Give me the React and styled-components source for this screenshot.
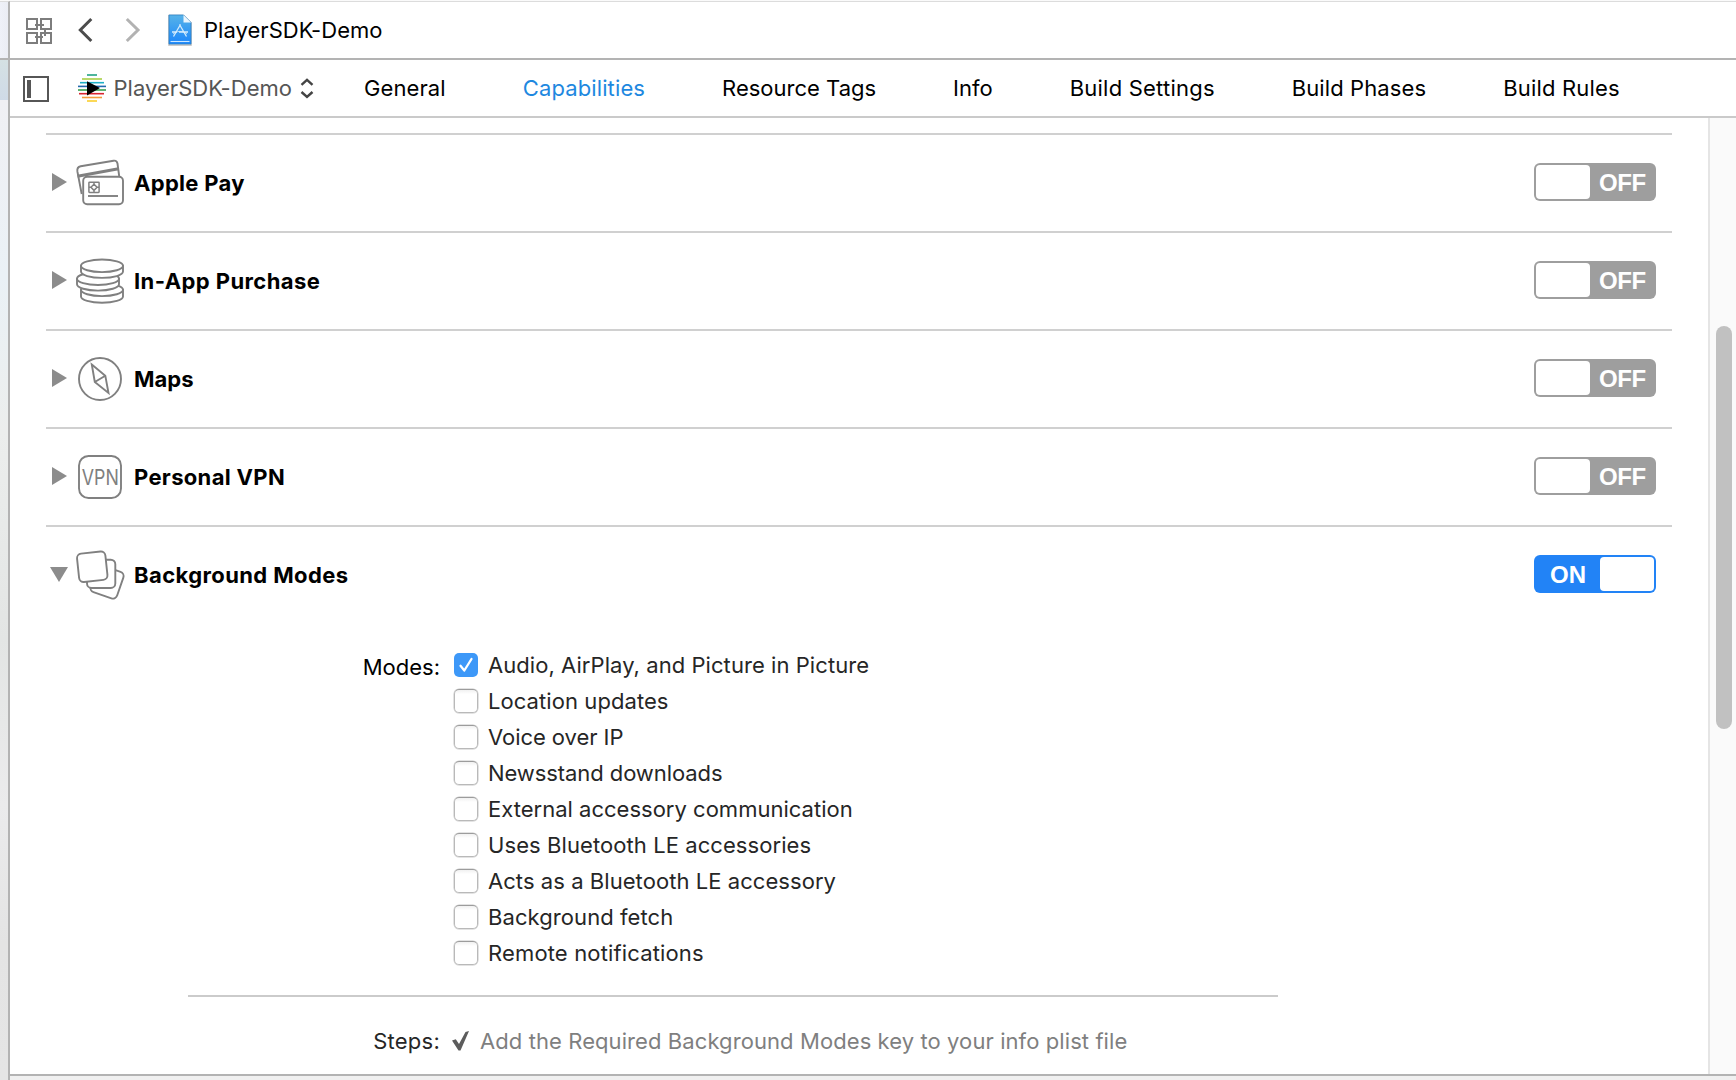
import React, { useState } from "react";
import styled, { createGlobalStyle } from "styled-components";

const GlobalStyle = createGlobalStyle`
  *, *::before, *::after { box-sizing: border-box; }
  body {
    margin: 0;
    background: #fff;
    color: #000;
    font: 400 22px/24px Inter, "Liberation Sans", sans-serif;
    overflow: hidden;
  }
`;

const Window = styled.div`
  display: flex;
  width: 1736px;
  height: 1080px;
  border-top: 1px solid #fafafa;
  overflow: hidden;
`;

const Navigator = styled.aside`
  display: flex;
  flex-direction: column;
  flex: 0 0 10px;
  border-right: 2px solid #b3b3b3;
  border-top: 1px solid #dcdcdc;
`;

const NavigatorTop = styled.div`
  height: 58px;
  border-bottom: 2px solid #b3b3b3;
  background: linear-gradient(90deg, #eff1f8, #ebedf4);
`;

const NavigatorSelection = styled.div`
  height: 40px;
  background: linear-gradient(#d5e1e3, #cfdae7);
`;

const NavigatorBody = styled.div`
  flex: 1;
  background: linear-gradient(#f0f0f4 0%, #eaf1f6 18%, #eceeed 34%, #e3e5e4 55%, #ebebec 72%, #e4e4e4 86%, #e5e5e5 100%);
`;

const Editor = styled.main`
  display: flex;
  flex-direction: column;
  flex: 1;
  min-width: 0;
  border-top: 1px solid #dcdcdc;
`;

const JumpBar = styled.header`
  display: flex;
  align-items: center;
  height: 58px;
  padding-left: 16px;
  border-bottom: 2px solid #b3b3b3;
`;

const IconButton = styled.button`
  display: flex;
  padding: ${(p) => p.$drop || 0}px 0 0;
  margin: 0 ${(p) => p.$after}px 0 0;
  border: 0;
  background: none;
`;

const Glyph = styled.svg`
  display: block;
  flex: none;
  overflow: visible;
`;

const Label = styled.span`
  white-space: nowrap;
  letter-spacing: ${(p) => p.$track || 0}px;
`;

const TabBar = styled.nav`
  display: flex;
  align-items: center;
  height: 58px;
  padding-left: 13px;
  border-bottom: 2px solid #cacaca;
`;

const TargetPicker = styled.div`
  display: flex;
  align-items: center;
  width: 248px;
  margin-left: 29px;
  gap: 7.5px;
  color: #565656;
`;

const Tabs = styled.div`
  display: flex;
  gap: 77px;
  margin-left: 38px;
`;

const Tab = styled.button`
  padding: 0;
  border: 0;
  background: none;
  font: inherit;
  white-space: nowrap;
  letter-spacing: ${(p) => p.$track}px;
  color: ${(p) => (p.$active ? "#1e88e0" : "#000")};
`;

const Viewport = styled.div`
  display: flex;
  flex: 1;
  min-height: 0;
`;

const Content = styled.section`
  flex: 1;
  padding: 15px 36px 0;
`;

const Capability = styled.div`
  display: flex;
  align-items: center;
  height: 98px;
  padding: 0 16px 0 4px;
  border-top: 2px solid #d0d0d0;
`;

const Disclosure = styled.span`
  display: flex;
  justify-content: center;
  width: 18px;
  margin-bottom: 2px;
`;

const CapabilityIcon = styled(Glyph)`
  margin: 0 10px 0 8px;
`;

const CapabilityName = styled.h2`
  flex: 1;
  margin: 0;
  font: 700 22px/24px Inter, "Liberation Sans", sans-serif;
  letter-spacing: ${(p) => p.$track}px;
`;

const Toggle = styled.button`
  display: flex;
  flex-direction: ${(p) => (p.$on ? "row-reverse" : "row")};
  align-items: stretch;
  width: 122px;
  height: 38px;
  margin: 0 0 2px;
  padding: 2px;
  border: 0;
  border-radius: 6px;
  background: ${(p) => (p.$on ? "#2283f6" : "#9e9e9e")};
`;

const Knob = styled.span`
  width: 54px;
  border-radius: 4px;
  background: #fff;
`;

const ToggleText = styled.span`
  flex: 1;
  padding-left: ${(p) => (p.$on ? 0 : 1)}px;
  font: 700 24px/35px "Liberation Sans", Arial, sans-serif;
  letter-spacing: ${(p) => (p.$on ? 0 : -0.4)}px;
  text-align: center;
  color: #fff;
`;

const ModesForm = styled.div`
  display: grid;
  grid-template-columns: 394px 1fr;
  column-gap: 14px;
  padding-top: 30px;
`;

const FormLabel = styled.div`
  padding-top: ${(p) => p.$drop || 0}px;
  text-align: right;
  letter-spacing: ${(p) => p.$track}px;
  color: ${(p) => p.$color};
`;

const ModeList = styled.div`
  display: flex;
  flex-direction: column;
  gap: 12px;
`;

const ModeRow = styled.label`
  display: flex;
  align-items: center;
  height: 24px;
  gap: 10px;
  color: #262626;
`;

const Box = styled.span`
  display: flex;
  align-items: center;
  justify-content: center;
  width: 24px;
  height: 24px;
  border-radius: 5px;
  border: ${(p) => (p.$checked ? "0" : "1.5px solid #b9b9b9")};
  border-top-color: #9c9c9c;
  box-shadow: ${(p) => (p.$checked ? "none" : "0 0 0 0.5px #c8c8c8")};
  background: ${(p) => (p.$checked ? "#3d98f8" : "linear-gradient(#f1f1f1, #fff 4px)")};
`;

const StepsRule = styled.hr`
  width: 1090px;
  height: 2px;
  margin: 30px 0 32px 142px;
  border: 0;
  background: #cbcbcb;
`;

const StepsRow = styled.div`
  display: grid;
  grid-template-columns: 394px 1fr;
  column-gap: 12px;
`;

const Step = styled.div`
  display: flex;
  align-items: center;
  gap: 11px;
  color: #7f7f7f;
`;

const ScrollTrack = styled.div`
  flex: 0 0 28px;
  padding: 208px 0 0 6px;
  border-left: 2px solid #e5e5e5;
  background: #fafafa;
`;

const ScrollThumb = styled.div`
  width: 16px;
  height: 403px;
  border-radius: 8px;
  background: #c1c1c1;
`;

const BottomBar = styled.footer`
  height: 6px;
  border-top: 2px solid #b3b3b3;
  background: #f0f0f0;
`;

const RelatedItems = () => (
  <Glyph width="26" height="26" fill="none" stroke="#7d7d7d" strokeWidth="2">
    <path d="M11 5V1H1V11H11V9M15 5V1H25V11H15V9M11 17V15H1V25H11V21M21 15H25V25H15V19M15 16V15H17" />
    <path d="M9 7H18M15 5V9M11 5V9M19 11V18M17 15H21M9 19H17M11 17V21M15 16V21" />
  </Glyph>
);

const Chevron = ({ forward }) => (
  <Glyph width="13" height="24" fill="none" stroke={forward ? "#b2b2b2" : "#4c4c4c"} strokeWidth="3">
    <path d={forward ? "M.8 1L12 12L.8 23" : "M12.300 1L1.300 12L12.300 23"} />
  </Glyph>
);

const ProjectFile = () => (
  <Glyph width="24" height="32">
    <defs>
      <linearGradient id="file" x1="0" y1="0" x2="0" y2="1">
        <stop offset="0" stopColor="#57b3e8" />
        <stop offset="1" stopColor="#1b86fb" />
      </linearGradient>
    </defs>
    <path d="M1 1.500H15.500L23 9V31H1Z" fill="none" stroke="#bbb" strokeWidth="1.600" />
    <path d="M1 1H15.500L23 8.500V30H1Z" fill="url(#file)" stroke="#2e83c8" strokeWidth=".8" />
    <path d="M15.500 1V8.500H23Z" fill="#e9f5fd" />
    <path d="M2.500 27.500H21.500" stroke="#cde8ff" strokeWidth="1.100" />
    <g fill="none" stroke="#d4ecfd" strokeWidth="1.300">
      <path d="M12.500 10.500L5.500 22.500M11.500 10.500L18.500 22.500M4 18H9M11 18H20" />
      <path d="M5 20C8 17 15 16 19 20" strokeWidth=".8" />
    </g>
  </Glyph>
);

const PanelIcon = () => (
  <Glyph width="26" height="26">
    <rect x="1" y="1" width="24" height="24" fill="none" stroke="#565656" strokeWidth="2" />
    <rect x="4" y="4" width="4" height="18" fill="#565656" />
  </Glyph>
);

const stripes = [
  ["#23a384", 9, 19, 1],
  ["#a8cf45", 4, 24, 5],
  ["#1fb0c6", 2, 26, 8.7],
  ["#2269ad", 0, 28, 12.4],
  ["#38a04f", 0, 28, 16],
  ["#d92732", 1, 26, 19.7],
  ["#f39a3b", 4, 24, 23.5],
  ["#fbcf2e", 9, 19, 27],
];

const AppLogo = () => (
  <Glyph width="28" height="28">
    {stripes.map(([color, from, to, y]) => (
      <path key={color} d={`M${from} ${y}H${to}`} stroke={color} strokeWidth="1.600" />
    ))}
    <path d="M9 7.200L22 14.100L9 21.500Z" fill="#000" />
  </Glyph>
);

const PickerArrows = () => (
  <Glyph width="14" height="20" fill="none" stroke="#444" strokeWidth="2.400">
    <path d="M1.500 6.900L7 1.900L12.500 6.900M1.500 14L7 19L12.500 14" />
  </Glyph>
);

const Triangle = ({ open }) => (
  <Glyph width={open ? 18 : 15} height={open ? 15 : 18} fill="#8c8c8c">
    <path d={open ? "M0 0H18L9 15Z" : "M0 0L15 9L0 18Z"} />
  </Glyph>
);

const CapabilityFrame = ({ children }) => (
  <CapabilityIcon width="48" height="48" fill="none" stroke="#808080" strokeWidth="1.900" strokeLinejoin="round">
    {children}
  </CapabilityIcon>
);

const Cards = () => (
  <CapabilityFrame>
    <path d="M5.700 35L1.400 12.500Q.7 8.200 4.700 7.300L37.500 1.700Q40.800 1.200 41.500 4.500L43.300 18" />
    <path d="M1.500 17.300L42.500 9.800" strokeWidth="3" />
    <rect x="7.200" y="17.700" width="39.800" height="27.600" rx="4" fill="#fff" />
    <rect x="12.900" y="23.200" width="10.200" height="10.200" rx=".6" strokeWidth="1.500" />
    <path d="M18 25.200L21.100 28.300L18 31.400L14.900 28.300ZM18 23V25.200M18 31.400V33.600M12.900 28.300H14.900M21.100 28.300H23.100" strokeWidth="1.500" />
    <path d="M12 37H42" />
  </CapabilityFrame>
);

const Coin = ({ x, top, depth }) => (
  <>
    <path d={`M${x} ${top}V${top + depth}A21 6.300 0 0 0 ${x + 42} ${top + depth}V${top}Z`} fill="#fff" />
    <ellipse cx={x + 21} cy={top} rx="21" ry="6.300" fill="#fff" />
  </>
);

const Coins = () => (
  <CapabilityFrame>
    <Coin x={5} top={32.8} depth={6.6} />
    <Coin x={1} top={21.7} depth={5.6} />
    <Coin x={5} top={8.8} depth={5.8} />
  </CapabilityFrame>
);

const Compass = () => (
  <CapabilityFrame>
    <circle cx="24" cy="24" r="21" />
    <path d="M15.800 9.500L29.300 20.700L32.500 38L18.800 27ZM18.800 27L29.300 20.700" strokeLinejoin="miter" />
  </CapabilityFrame>
);

const Vpn = () => (
  <CapabilityFrame>
    <rect x="3" y="3" width="42" height="42" rx="9.500" />
    <text x="5.800" y="31.600" textLength="37" lengthAdjust="spacingAndGlyphs" fill="#808080" stroke="none" fontSize="21.500" fontWeight="400">
      VPN
    </text>
  </CapabilityFrame>
);

const Layers = () => (
  <CapabilityFrame>
    <rect x="17" y="17" width="28" height="28" rx="4.500" transform="rotate(19 31 31)" fill="#fff" />
    <rect x="11" y="8.700" width="28.300" height="28.300" rx="4.500" fill="#fff" />
    <rect x="2" y="1.500" width="28.500" height="28.500" rx="4.500" transform="rotate(-6 16.200 15.800)" fill="#fff" />
  </CapabilityFrame>
);

const Tick = () => (
  <Glyph width="16" height="18" fill="none" stroke="#fff" strokeWidth="2.300" strokeLinecap="round" strokeLinejoin="round">
    <path d="M2.500 9.800L6.300 14.500L13.500 3" />
  </Glyph>
);

const StepTick = () => (
  <Glyph width="17" height="20" fill="#5c5c5c">
    <path d="M0 9.500L3.800 8.300L7 13L13.500 1L17 0L8.500 19.500H6.500Z" />
  </Glyph>
);

const tabs = [
  ["General", 0.1],
  ["Capabilities", 0.12],
  ["Resource Tags", 0],
  ["Info", 0],
  ["Build Settings", 0.22],
  ["Build Phases", 0.1],
  ["Build Rules", 0.18],
];

const capabilities = [
  { name: "Apple Pay", icon: Cards, track: 0.3 },
  { name: "In-App Purchase", icon: Coins, track: 0.42 },
  { name: "Maps", icon: Compass, track: 0 },
  { name: "Personal VPN", icon: Vpn, track: 0.33 },
  { name: "Background Modes", icon: Layers, track: 0.4, open: true },
];

const modes = [
  ["Audio, AirPlay, and Picture in Picture", 0.06],
  ["Location updates", 0.07],
  ["Voice over IP", -0.05],
  ["Newsstand downloads", -0.08],
  ["External accessory communication", 0.01],
  ["Uses Bluetooth LE accessories", 0.08],
  ["Acts as a Bluetooth LE accessory", 0.06],
  ["Background fetch", 0.08],
  ["Remote notifications", 0.15],
];

export default function App() {
  const [activeTab, setActiveTab] = useState("Capabilities");

  return (
    <>
      <GlobalStyle />
      <Window>
        <Navigator>
          <NavigatorTop />
          <NavigatorSelection />
          <NavigatorBody />
        </Navigator>
        <Editor>
          <JumpBar>
            <IconButton $after={27} $drop={2}><RelatedItems /></IconButton>
            <IconButton $after={34}><Chevron /></IconButton>
            <IconButton $after={29}><Chevron forward /></IconButton>
            <IconButton $after={12}><ProjectFile /></IconButton>
            <Label $track={0.03}>PlayerSDK-Demo</Label>
          </JumpBar>
          <TabBar>
            <IconButton $after={0} $drop={2}><PanelIcon /></IconButton>
            <TargetPicker>
              <AppLogo />
              <Label $track={0.03}>PlayerSDK-Demo</Label>
              <PickerArrows />
            </TargetPicker>
            <Tabs>
              {tabs.map(([name, track]) => (
                <Tab key={name} $track={track} $active={name === activeTab} onClick={() => setActiveTab(name)}>
                  {name}
                </Tab>
              ))}
            </Tabs>
          </TabBar>
          <Viewport>
            <Content>
              {capabilities.map(({ name, icon: Icon, track, open }) => (
                <Capability key={name}>
                  <Disclosure><Triangle open={open} /></Disclosure>
                  <Icon />
                  <CapabilityName $track={track}>{name}</CapabilityName>
                  <Toggle $on={open}>
                    <Knob />
                    <ToggleText $on={open}>{open ? "ON" : "OFF"}</ToggleText>
                  </Toggle>
                </Capability>
              ))}
              <ModesForm>
                <FormLabel $drop={2} $track={0} $color="#000">Modes:</FormLabel>
                <ModeList>
                  {modes.map(([name, track], index) => (
                    <ModeRow key={name}>
                      <Box $checked={index === 0}>{index === 0 && <Tick />}</Box>
                      <Label $track={track}>{name}</Label>
                    </ModeRow>
                  ))}
                </ModeList>
              </ModesForm>
              <StepsRule />
              <StepsRow>
                <FormLabel $track={0.25} $color="#262626">Steps:</FormLabel>
                <Step>
                  <StepTick />
                  <Label $track={0.085}>Add the Required Background Modes key to your info plist file</Label>
                </Step>
              </StepsRow>
            </Content>
            <ScrollTrack>
              <ScrollThumb />
            </ScrollTrack>
          </Viewport>
          <BottomBar />
        </Editor>
      </Window>
    </>
  );
}
